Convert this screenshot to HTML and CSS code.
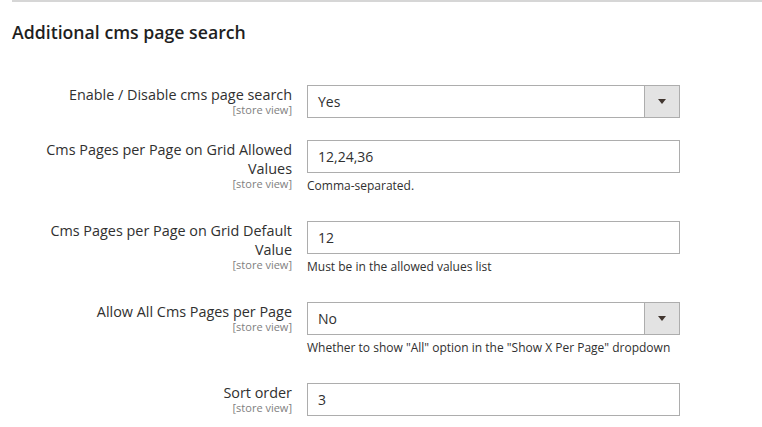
FILE: index.html
```html
<!DOCTYPE html>
<html>
<head>
<meta charset="utf-8">
<link rel="stylesheet" href="styles.css">
</head>
<body>
<div class="section">
  <h2 class="title">Additional cms page search</h2>
  <div class="fields">
    <div class="row row-first">
      <div class="label"><span class="label-text">Enable / Disable cms page search</span><span class="scope">[store view]</span></div>
      <div class="control">
        <div class="select"><span class="value">Yes</span><span class="arrow-btn"><span class="arrow"></span></span></div>
      </div>
    </div>
    <div class="row">
      <div class="label"><span class="label-text">Cms Pages per Page on Grid Allowed Values</span><span class="scope">[store view]</span></div>
      <div class="control">
        <div class="input"><span class="value">12,24,36</span></div>
        <div class="note">Comma-separated.</div>
      </div>
    </div>
    <div class="row">
      <div class="label"><span class="label-text">Cms Pages per Page on Grid Default Value</span><span class="scope">[store view]</span></div>
      <div class="control">
        <div class="input"><span class="value">12</span></div>
        <div class="note">Must be in the allowed values list</div>
      </div>
    </div>
    <div class="row">
      <div class="label"><span class="label-text">Allow All Cms Pages per Page</span><span class="scope">[store view]</span></div>
      <div class="control">
        <div class="select"><span class="value">No</span><span class="arrow-btn"><span class="arrow"></span></span></div>
        <div class="note">Whether to show "All" option in the "Show X Per Page" dropdown</div>
      </div>
    </div>
    <div class="row">
      <div class="label"><span class="label-text">Sort order</span><span class="scope">[store view]</span></div>
      <div class="control">
        <div class="input"><span class="value">3</span></div>
      </div>
    </div>
  </div>
</div>
</body>
</html>
```

FILE: styles.css
```css
html, body {
  margin: 0;
  padding: 0;
  background: #fff;
  overflow: hidden;
}
body {
  font-family: "Open Sans", "Liberation Sans", sans-serif;
  color: #303030;
  width: 762px;
  height: 427px;
}
.section {
  margin-left: 12px;
  border-top: 2px solid #d6d6d6;
}
.title {
  margin: 0;
  padding-top: 19px;
  font-size: 17.7px;
  line-height: 22px;
  font-weight: 600;
  color: #1f1f1f;
  height: 63px;
  box-sizing: border-box;
}
.fields {
  padding-top: 20px;
  padding-left: 20px;
}
.row {
  display: grid;
  grid-template-columns: 260px 373px;
  column-gap: 15px;
  margin-bottom: 27px;
}
.row-first {
  margin-bottom: 22px;
}
.label {
  display: flex;
  flex-direction: column;
  align-items: flex-end;
  text-align: right;
}
.label-text {
  font-size: 14.4px;
  line-height: 19px;
  color: #303030;
}
.scope {
  font-size: 11px;
  line-height: 11px;
  color: #808080;
}
.control {
  display: flex;
  flex-direction: column;
}
.input, .select {
  height: 33px;
  box-sizing: border-box;
  border: 1px solid #adadad;
  background: #fff;
  display: flex;
  align-items: center;
}
.value {
  flex: 1;
  padding-left: 10px;
  font-size: 14px;
  color: #303030;
}
.arrow-btn {
  width: 34px;
  align-self: stretch;
  background: #e3e3e3;
  border-left: 1px solid #adadad;
  display: flex;
  align-items: center;
  justify-content: center;
}
.arrow {
  width: 0;
  height: 0;
  border-left: 4px solid transparent;
  border-right: 4px solid transparent;
  border-top: 5px solid #41362f;
}
.note {
  margin-top: 5px;
  font-size: 12px;
  line-height: 16px;
  color: #303030;
}
```
